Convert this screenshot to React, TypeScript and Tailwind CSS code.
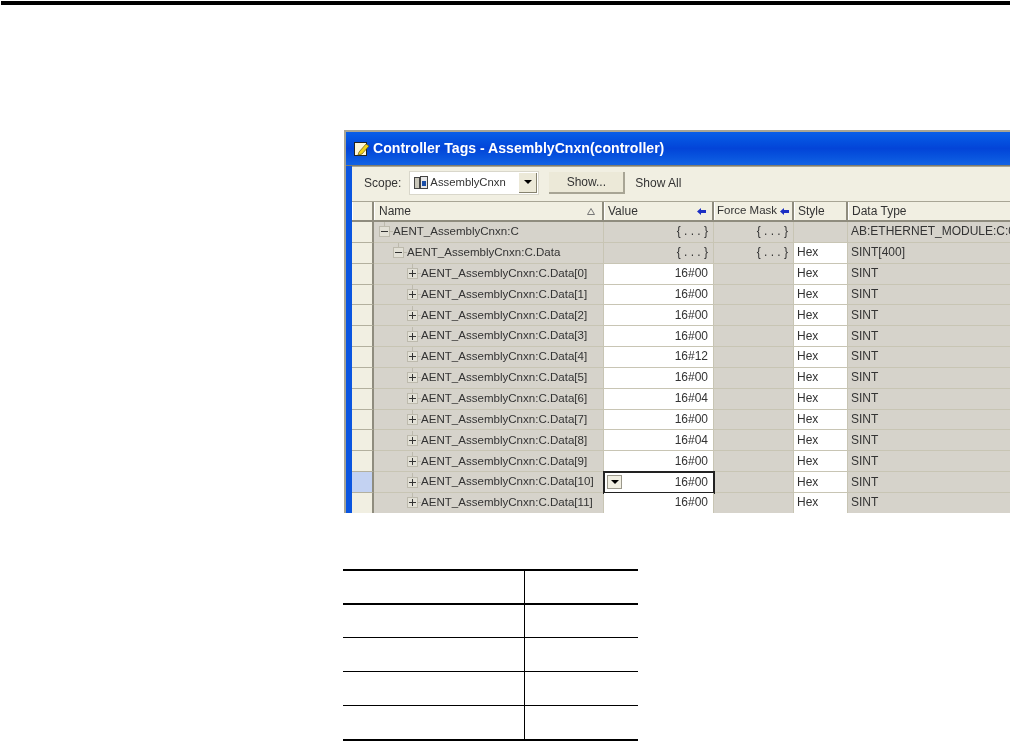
const rows = [
  "00", "00", "00", "00", "12", "00", "04", "00", "04", "00", "00", "00",
];

const headCell = "relative flex items-center h-full whitespace-nowrap border-r-2 border-r-[#8f8c7e] border-l border-l-white";

function Arrow() {
  return (
    <svg width="9" height="7" viewBox="0 0 9 7" className="shrink-0">
      <path d="M0 3.5 L4 0 V2 H9 V5 H4 V7 Z" fill="#1c2fc4" />
    </svg>
  );
}

function TreeBox({ open }: { open?: boolean }) {
  return (
    <span className="relative block w-[11px] h-[11px] border border-[#bdbaad] bg-[#e2e0d6] shrink-0">
      <span className="absolute left-[1px] right-[1px] top-[4px] h-px bg-[#333]" />
      {!open && <span className="absolute top-[1px] bottom-[1px] left-[4px] w-px bg-[#333]" />}
      <span className="absolute -right-[4px] top-[4px] w-[3px] h-px bg-[#bdbaad]" />
      <span className="absolute left-[4px] -top-[5px] w-px h-[4px] bg-[#bdbaad]" />
    </span>
  );
}

function RowHead({ active }: { active?: boolean }) {
  return (
    <div className={`w-[22px] h-full shrink-0 border-r-2 border-b border-r-[#8f8c7e] border-b-[#b3b09e] ${active ? "bg-[#c3d2f2]" : "bg-[#f1efe2]"}`} />
  );
}

function Row({ name, indent, open, value, style, type, force, white, active }: {
  name: string; indent: number; open?: boolean; value: string; style: string; type: string; force?: string; white?: boolean; active?: boolean;
}) {
  return (
    <div className="flex h-[20.85px] items-stretch">
      <RowHead active={active} />
      <div className="w-[230px] shrink-0 flex items-center text-[11.55px] border-r border-b border-[#c8c5b4] bg-[#d6d3cb]" style={{ paddingLeft: indent }}>
        <TreeBox open={open} />
        <span className="ml-[3px] whitespace-nowrap">{name}</span>
      </div>
      <div className={`relative w-[110px] shrink-0 flex items-center justify-end pr-[5px] pb-px border-r border-b border-[#c8c5b4] ${white ? "bg-white" : "bg-[#d6d3cb]"} ${active ? "outline-2 -outline-offset-1 outline-[#222]" : ""}`}>
        {active && (
          <span className="absolute left-[3px] top-[3px] w-[15px] h-[14px] bg-[#f1efe2] border border-[#9b988b] flex items-center justify-center">
            <span className="border-x-[4px] border-x-transparent border-t-[4px] border-t-black" />
          </span>
        )}
        {value}
      </div>
      <div className="w-[80px] shrink-0 flex items-center justify-end pr-[5px] pb-px border-r border-b border-[#c8c5b4] bg-[#d6d3cb]">
        {force}
      </div>
      <div className={`w-[54px] shrink-0 flex items-center pl-[3px] pb-px border-r border-b border-[#c8c5b4] ${style ? "bg-white" : "bg-[#d6d3cb]"}`}>
        {style}
      </div>
      <div className="flex-1 min-w-0 flex items-center pl-[3px] pb-px border-b border-[#c8c5b4] bg-[#d6d3cb] whitespace-nowrap overflow-hidden">
        {type}
      </div>
    </div>
  );
}

export default function App() {
  return (
    <div className="w-[1010px] h-[741px] overflow-hidden bg-white font-['Liberation_Sans',sans-serif]">
      <div className="ml-px mt-px h-1 bg-black" />

      {/* screenshot of the tag editor */}
      <div className="ml-[344px] mt-[125px] h-[383px] w-[666px] overflow-hidden border-t-2 border-l-2 border-[#a8a595] bg-[#0a55e0] pl-[6px] blur-[0.35px]">
        <div className="h-[34px] -ml-[6px] pl-[8px] flex items-center gap-[3px] bg-gradient-to-b from-[#0a5fe8] via-[#0344d8] to-[#1262e4] border-b border-[#7d7b6e]">
          <svg width="16" height="16" viewBox="0 0 16 16" className="shrink-0">
            <rect x="0.5" y="1.5" width="12" height="13" fill="#fdf6d8" stroke="#222" />
            <path d="M5 11 L12 3 L15 5 L8 13 L4 14 Z" fill="#f2d21c" stroke="#6b5a10" strokeWidth="0.7" />
          </svg>
          <span className="text-white font-bold text-[14.1px] whitespace-nowrap">
            Controller Tags - AssemblyCnxn(controller)
          </span>
        </div>

        <div className="h-[35px] flex items-center bg-[#f1efe2] text-[12px] text-[#333] pl-[12px] pb-[3px] border-t border-[#a8a595]">
          <span>Scope:</span>
          <div className="ml-[8px] w-[130px] h-[24px] bg-white border border-[#d9d7cb] flex items-center pl-[4px]">
            <svg width="14" height="15" viewBox="0 0 14 15" className="shrink-0">
              <rect x="0.5" y="2.5" width="5" height="11" fill="#c9c7bb" stroke="#444" />
              <rect x="6.5" y="1.5" width="7" height="12" fill="#e8e8e8" stroke="#444" />
              <rect x="8" y="6" width="4" height="5" fill="#1c4fa8" />
            </svg>
            <span className="ml-[2px] flex-1 text-[11.3px]">AssemblyCnxn</span>
            <span className="w-[18px] h-[20px] mr-px bg-[#ece9d8] border-r border-b border-[#85826f] flex items-center justify-center">
              <span className="border-x-[4px] border-x-transparent border-t-[4px] border-t-black" />
            </span>
          </div>
          <div className="ml-[10px] w-[76px] h-[22px] bg-[#ece9d8] border-r-2 border-b-2 border-[#a8a595] flex items-center justify-center">
            Show...
          </div>
          <span className="ml-[10px]">Show All</span>
        </div>

        <div className="text-[12px] text-[#333] bg-[#f1efe2]">
          <div className="flex h-[21px] items-stretch border-t border-[#a8a595] border-b-2 border-b-[#8f8c7e]">
            <div className={`${headCell} w-[22px] shrink-0`} />
            <div className={`${headCell} w-[230px] shrink-0 pl-[4px] justify-between pr-[7px]`}>
              Name
              <svg width="8" height="7" viewBox="0 0 8 7"><path d="M4 .5 L7.5 6.5 H.5 Z" fill="none" stroke="#777" /></svg>
            </div>
            <div className={`${headCell} w-[110px] shrink-0 pl-[3px] justify-between pr-[6px]`}>
              Value
              <Arrow />
            </div>
            <div className={`${headCell} w-[80px] shrink-0 pl-[2px] pr-[3px] justify-between text-[11.5px]`}>
              Force Mask
              <Arrow />
            </div>
            <div className={`${headCell} w-[54px] shrink-0 pl-[3px]`}>Style</div>
            <div className="flex-1 flex items-center pl-[3px] border-l border-l-white">Data Type</div>
          </div>

          <Row name="AENT_AssemblyCnxn:C" indent={5} open value="{ . . . }" force="{ . . . }" style="" type="AB:ETHERNET_MODULE:C:0" />
          <Row name="AENT_AssemblyCnxn:C.Data" indent={19} open value="{ . . . }" force="{ . . . }" style="Hex" type="SINT[400]" />
          {rows.map((v, i) => (
            <Row
              key={i}
              name={`AENT_AssemblyCnxn:C.Data[${i}]`}
              indent={33}
              value={`16#${v}`}
              style="Hex"
              type="SINT"
              white
              active={i === 10}
            />
          ))}
        </div>
      </div>

      {/* empty ruled table below the picture */}
      <div className="ml-[343px] mt-[56px] w-[295px]">
        <div className="flex h-[36px] border-t-2 border-b-2 border-black">
          <div className="w-[182px] border-r border-black" />
        </div>
        <div className="flex h-[33px] border-b border-black">
          <div className="w-[182px] border-r border-black" />
        </div>
        {[0, 1].map((i) => (
          <div key={i} className="flex h-[34px] border-b border-black">
            <div className="w-[182px] border-r border-black" />
          </div>
        ))}
        <div className="flex h-[35px] border-b-2 border-black">
          <div className="w-[182px] border-r border-black" />
        </div>
      </div>
    </div>
  );
}
